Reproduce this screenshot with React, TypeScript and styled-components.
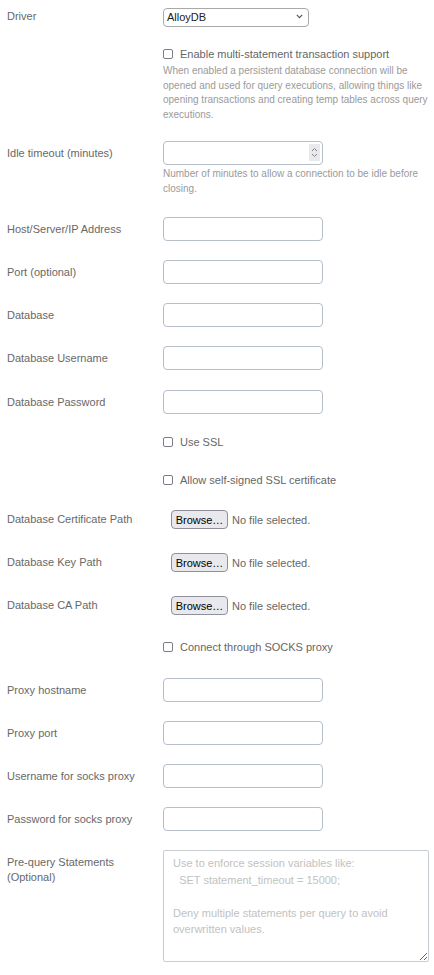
import React from "react";
import styled, { createGlobalStyle } from "styled-components";

const Global = createGlobalStyle`
  html, body { margin: 0; padding: 0; background: #fff; }
  body { font-family: "Liberation Sans", Arial, sans-serif; }
  * { box-sizing: border-box; }
`;

const Form = styled.div`
  display: flex;
  flex-direction: column;
  padding: 7px 0 0 7px;
  width: 434px;
`;

const Row = styled.div<{ $mt?: number; $top?: boolean }>`
  display: flex;
  align-items: ${(p) => (p.$top ? "flex-start" : "center")};
  margin-top: ${(p) => p.$mt ?? 0}px;
`;

const Label = styled.label<{ $pt?: number }>`
  flex: 0 0 156px;
  font-size: 11px;
  line-height: 15px;
  color: #686868;
  padding-top: ${(p) => p.$pt ?? 0}px;
`;

const SelectWrap = styled.div`
  position: relative;
  width: 146px;
  height: 19px;
`;

const Select = styled.select`
  appearance: none;
  width: 100%;
  height: 100%;
  border: 1px solid #a9a9a9;
  border-radius: 4px;
  background: #fff;
  font-family: "Liberation Sans", Arial, sans-serif;
  font-size: 11px;
  color: #222;
  padding: 0 0 0 3px;
  margin: 0;
`;

const Chevron = styled.svg`
  position: absolute;
  right: 6px;
  top: 7px;
  pointer-events: none;
`;

const TextInput = styled.input`
  width: 160px;
  height: 24px;
  border: 1px solid #b6bec7;
  border-radius: 4px;
  background: #fff;
  margin: 0;
  padding: 0 6px;
  font-size: 11px;
  font-family: "Liberation Sans", Arial, sans-serif;
`;

const NumberWrap = styled.div`
  position: relative;
  width: 160px;
  height: 24px;
`;

const Spinner = styled.div`
  position: absolute;
  right: 3px;
  top: 3px;
  width: 11px;
  height: 17px;
  background: #e9e9ed;
  display: flex;
  align-items: center;
  justify-content: center;
`;

const CheckLine = styled.label`
  display: flex;
  align-items: center;
  gap: 7px;
  font-size: 11px;
  line-height: 14px;
  color: #666;
  margin-left: 156px;
`;

const CheckBox = styled.input.attrs({ type: "checkbox" })`
  appearance: none;
  margin: 0;
  width: 10px;
  height: 10px;
  border: 1px solid #7d7d87;
  border-radius: 2px;
  background: #fff;
  flex: 0 0 auto;
`;

const Help = styled.div<{ $mt?: number; $ml?: number }>`
  font-size: 10px;
  line-height: 14.5px;
  color: #9a9a9a;
  margin-top: ${(p) => p.$mt ?? 0}px;
  margin-left: ${(p) => p.$ml ?? 0}px;
  width: 266px;
`;

const FileLine = styled.div`
  display: flex;
  align-items: center;
  gap: 4px;
  margin-left: 8px;
`;

const BrowseButton = styled.button`
  height: 19px;
  width: 57px;
  padding: 0;
  margin: 0;
  border: 1px solid #8f8f9d;
  border-radius: 4px;
  background: #e9e9ed;
  color: #000;
  font-family: "Liberation Sans", Arial, sans-serif;
  font-size: 11px;
`;

const NoFile = styled.span`
  font-size: 11px;
  color: #666;
`;

const TextArea = styled.textarea`
  width: 266px;
  height: 112px;
  border: 1px solid #c8cdd2;
  border-radius: 2px;
  margin: 0;
  padding: 4px 9px;
  font-family: "Liberation Sans", Arial, sans-serif;
  font-size: 11px;
  line-height: 16.5px;
  white-space: pre-wrap;
  resize: vertical;
  &::placeholder { color: #c2c2c2; }
`;

const ChevronIcon = () => (
  <Chevron width="7" height="5" viewBox="0 0 7 5">
    <path d="M0.8 0.8 L3.5 3.6 L6.2 0.8" fill="none" stroke="#555" strokeWidth="1.1" />
  </Chevron>
);

const SpinIcon = () => (
  <svg width="7" height="13" viewBox="0 0 7 13">
    <path d="M1 5 L3.5 2.5 L6 5" fill="none" stroke="#777" strokeWidth="0.9" />
    <path d="M1 8 L3.5 10.5 L6 8" fill="none" stroke="#777" strokeWidth="0.9" />
  </svg>
);

const InputRow = ({ label, mt, type = "text" }: { label: string; mt: number; type?: string }) => (
  <Row $mt={mt}>
    <Label>{label}</Label>
    <TextInput type={type} />
  </Row>
);

const FileRow = ({ label, mt }: { label: string; mt: number }) => (
  <Row $mt={mt}>
    <Label>{label}</Label>
    <FileLine>
      <BrowseButton type="button">Browse…</BrowseButton>
      <NoFile>No file selected.</NoFile>
    </FileLine>
  </Row>
);

const CheckRow = ({ text, mt }: { text: string; mt: number }) => (
  <Row $mt={mt}>
    <CheckLine>
      <CheckBox />
      {text}
    </CheckLine>
  </Row>
);

export default function App() {
  return (
    <>
      <Global />
      <Form>
        <Row>
          <Label>Driver</Label>
          <SelectWrap>
            <Select defaultValue="alloydb">
              <option value="alloydb">AlloyDB</option>
            </Select>
            <ChevronIcon />
          </SelectWrap>
        </Row>

        <Row $mt={21}>
          <CheckLine>
            <CheckBox />
            Enable multi-statement transaction support
          </CheckLine>
        </Row>
        <Help $mt={3} $ml={156}>
          When enabled a persistent database connection will be opened and used for query executions, allowing things like opening transactions and creating temp tables across query executions.
        </Help>

        <Row $mt={19}>
          <Label>Idle timeout (minutes)</Label>
          <NumberWrap>
            <TextInput />
            <Spinner>
              <SpinIcon />
            </Spinner>
          </NumberWrap>
        </Row>
        <Help $mt={2} $ml={156}>
          Number of minutes to allow a connection to be idle before closing.
        </Help>

        <InputRow label="Host/Server/IP Address" mt={21} />
        <InputRow label="Port (optional)" mt={19} />
        <InputRow label="Database" mt={19} />
        <InputRow label="Database Username" mt={19} />
        <InputRow label="Database Password" mt={20} type="password" />

        <CheckRow text="Use SSL" mt={21} />
        <CheckRow text="Allow self-signed SSL certificate" mt={24} />

        <FileRow label="Database Certificate Path" mt={23} />
        <FileRow label="Database Key Path" mt={24} />
        <FileRow label="Database CA Path" mt={24} />

        <CheckRow text="Connect through SOCKS proxy" mt={25} />

        <InputRow label="Proxy hostname" mt={24} />
        <InputRow label="Proxy port" mt={19} />
        <InputRow label="Username for socks proxy" mt={19} />
        <InputRow label="Password for socks proxy" mt={19} type="password" />

        <Row $mt={19} $top>
          <Label $pt={5}>
            Pre-query Statements
            <br />
            (Optional)
          </Label>
          <TextArea
            placeholder={
              "Use to enforce session variables like:\n  SET statement_timeout = 15000;\n\nDeny multiple statements per query to avoid overwritten values."
            }
          />
        </Row>
      </Form>
    </>
  );
}
